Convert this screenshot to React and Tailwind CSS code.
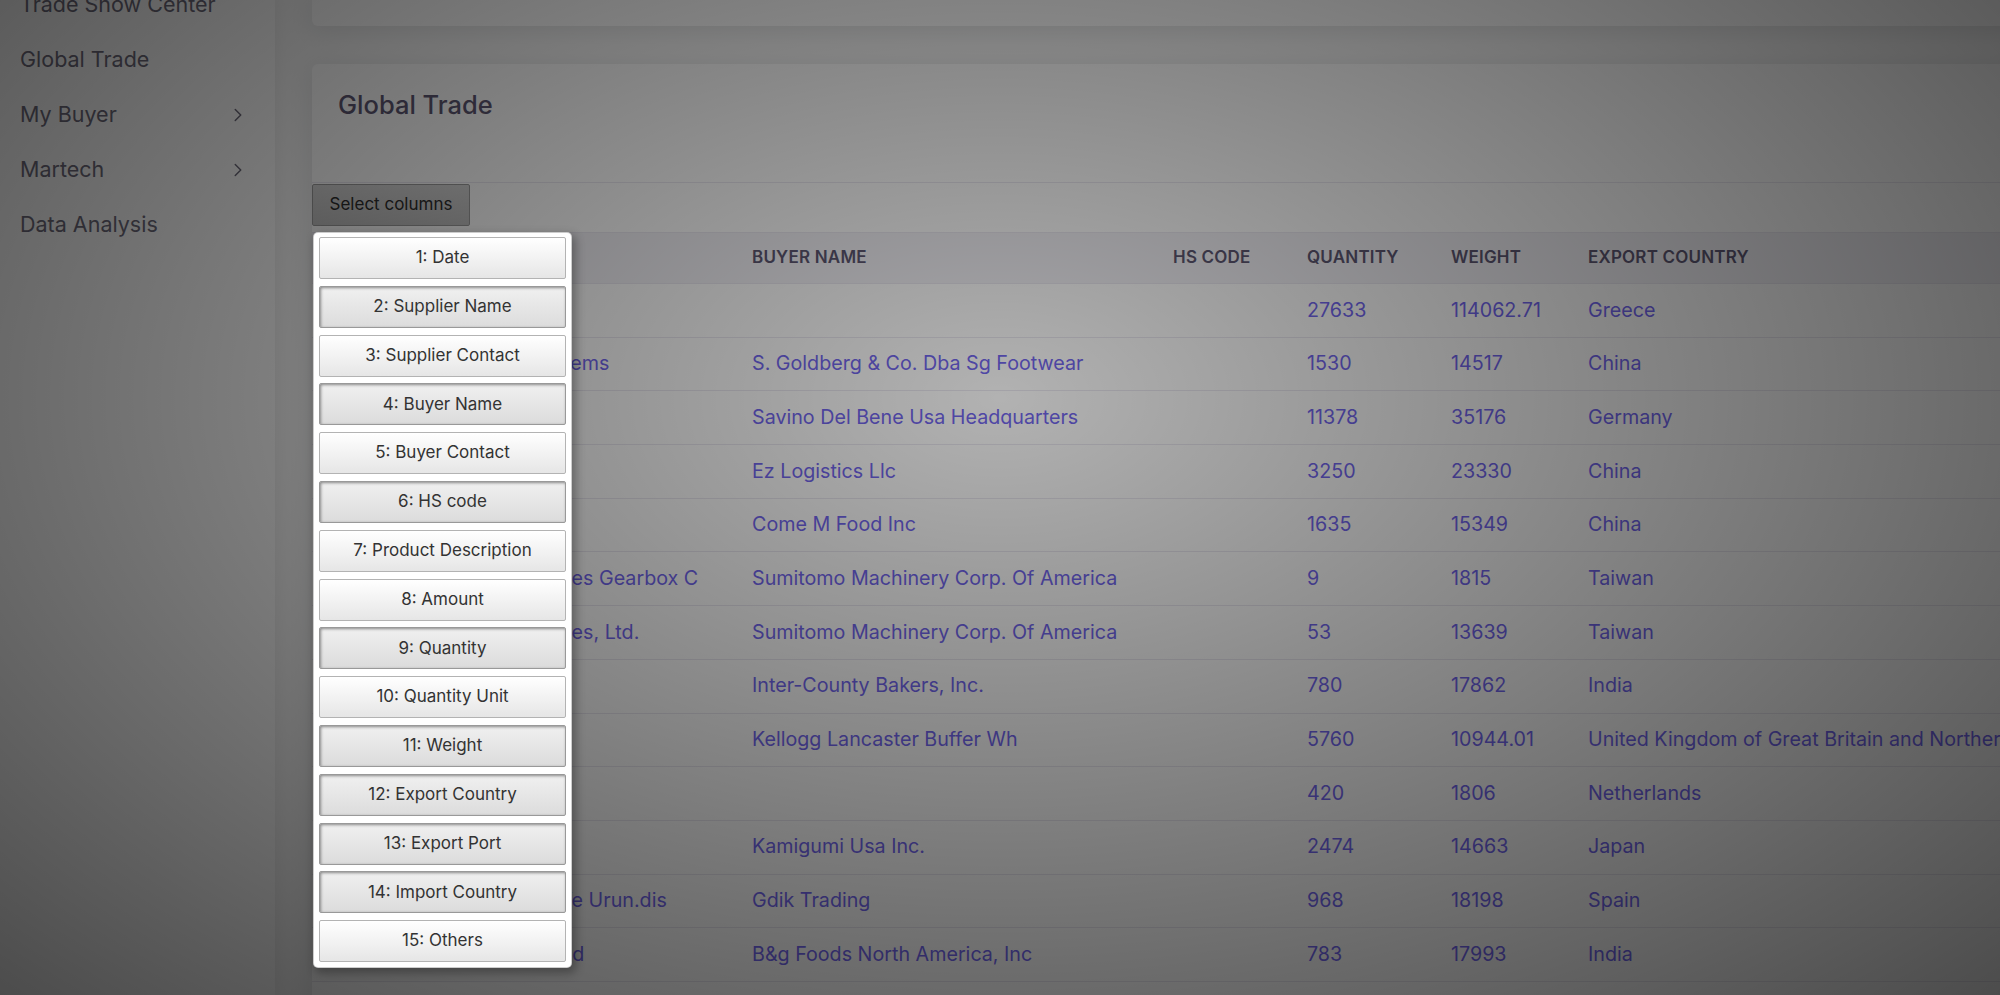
import { ChevronRight } from "lucide-react";

const menu = [
  { label: "Trade Show Center" },
  { label: "Global Trade" },
  { label: "My Buyer", sub: true },
  { label: "Martech", sub: true },
  { label: "Data Analysis" },
];

const columns = [
  { label: "1: Date", on: false },
  { label: "2: Supplier Name", on: true },
  { label: "3: Supplier Contact", on: false },
  { label: "4: Buyer Name", on: true },
  { label: "5: Buyer Contact", on: false },
  { label: "6: HS code", on: true },
  { label: "7: Product Description", on: false },
  { label: "8: Amount", on: false },
  { label: "9: Quantity", on: true },
  { label: "10: Quantity Unit", on: false },
  { label: "11: Weight", on: true },
  { label: "12: Export Country", on: true },
  { label: "13: Export Port", on: true },
  { label: "14: Import Country", on: true },
  { label: "15: Others", on: false },
];

const rows = [
  ["Olympia Trading S.A.", "", "27633", "114062.71", "Greece", "Piraeus", "United States"],
  ["Fujian Hengda Shoe Systems", "S. Goldberg & Co. Dba Sg Footwear", "1530", "14517", "China", "Yantian", "United States"],
  ["Schenker Deutschland", "Savino Del Bene Usa Headquarters", "11378", "35176", "Germany", "Hamburg", "United States"],
  ["Ningbo Logistics Co.", "Ez Logistics Llc", "3250", "23330", "China", "Ningbo", "United States"],
  ["Xiamen Foods Co.", "Come M Food Inc", "1635", "15349", "China", "Xiamen", "United States"],
  ["Sumitomo Heavy Industries Gearbox C", "Sumitomo Machinery Corp. Of America", "9", "1815", "Taiwan", "Kaohsiung", "United States"],
  ["Sumitomo Heavy Industries, Ltd.", "Sumitomo Machinery Corp. Of America", "53", "13639", "Taiwan", "Keelung", "United States"],
  ["Lal Qila Foods", "Inter-County Bakers, Inc.", "780", "17862", "India", "Nhava Sheva", "United States"],
  ["Kellogg Europe Limited", "Kellogg Lancaster Buffer Wh", "5760", "10944.01", "United Kingdom of Great Britain and Northern Ireland", "Felixstowe", "United States"],
  ["Hollandia Foods B.V.", "", "420", "1806", "Netherlands", "Rotterdam", "United States"],
  ["Nippon Express Co.", "Kamigumi Usa Inc.", "2474", "14663", "Japan", "Tokyo", "United States"],
  ["Gdik Gida Tarim Sanayi Ve Urun.dis", "Gdik Trading", "968", "18198", "Spain", "Valencia", "United States"],
  ["Ganesh Agro Food Limited", "B&g Foods North America, Inc", "783", "17993", "India", "Mundra", "United States"],
  ["Hellas Olive Co.", "Krinos Foods Llc", "1210", "20415", "Greece", "Piraeus", "United States"],
];

const heads = ["Supplier Name", "Buyer Name", "HS Code", "Quantity", "Weight", "Export Country", "Export Port", "Import Country"];
const widths = ["w-[414px]", "w-[421px]", "w-[134px]", "w-[144px]", "w-[137px]", "w-[620px]", "w-[260px]", "w-[260px]"];

function Sidebar() {
  return (
    <aside className="w-[275px] shrink-0 bg-white shadow-[0_0_15px_rgba(34,41,47,0.05)]">
      <nav className="-mt-[23px] flex flex-col">
        {menu.map((item) => (
          <div
            key={item.label}
            className="flex h-[55px] items-center justify-between pl-[20px] pr-[26px] text-[21.5px] text-[#6e6b7b]"
          >
            <span>{item.label}</span>
            {item.sub && <ChevronRight size={22} strokeWidth={1.6} />}
          </div>
        ))}
      </nav>
    </aside>
  );
}

function ColumnMenu() {
  return (
    <div className="absolute left-[313px] top-[232px] z-20 flex w-[259px] flex-col gap-[6.8px] rounded-[5px] border border-black/20 bg-white px-[5px] pb-[5px] pt-[4px] shadow-[3px_4px_10px_1px_rgba(0,0,0,0.3)]">
      {columns.map((c) => (
        <button
          key={c.label}
          className={
            c.on
              ? "h-[42px] w-full rounded-[2px] border border-[#999] bg-gradient-to-b from-[#f0f0f0] to-[#dcdcdc] text-[17px] text-[#333] shadow-[inset_1px_1px_3px_#888]"
              : "h-[42px] w-full rounded-[2px] border border-[#b3b3b3] bg-gradient-to-b from-white to-[#e6e6e6] text-[17px] text-[#333]"
          }
        >
          {c.label}
        </button>
      ))}
    </div>
  );
}

export default function App() {
  return (
    <div className="relative h-[995px] w-[2000px] overflow-hidden bg-[#f8f8f8] font-['Inter',sans-serif]">
      <div className="flex h-full">
        <Sidebar />
        <main className="flex min-w-0 flex-1 flex-col gap-[38px] overflow-hidden pl-[37px]">
          <div className="h-[26px] w-[2400px] shrink-0 rounded-b-[6px] bg-white shadow-[0_4px_24px_rgba(34,41,47,0.1)]" />

          <section className="w-[2400px] shrink-0 rounded-[6px] bg-white shadow-[0_4px_24px_rgba(34,41,47,0.1)]">
            <div className="h-[119px] border-b border-[#ebe9f1] px-[26px] pt-[22px]">
              <h2 className="text-[25.5px] font-medium text-[#5e5873]">Global Trade</h2>
            </div>

            <div className="pt-px">
              <button className="h-[42px] w-[158px] rounded-[2px] border border-[#9a9a9a] bg-gradient-to-b from-[#d2d2d2] to-[#bdbdbd] text-[17px] text-[#2d2d2d]">
                Select columns
              </button>
            </div>

            <table className="mt-[6px] w-[2390px] table-fixed border-collapse text-left">
              <colgroup>
                {widths.map((w, i) => (
                  <col key={i} className={w} />
                ))}
              </colgroup>
              <thead>
                <tr className="h-[51px] border-y border-[#ebe9f1] bg-[#f3f2f7]">
                  {heads.map((h) => (
                    <th
                      key={h}
                      className="overflow-hidden whitespace-nowrap px-[26px] text-[17px] font-semibold uppercase tracking-[0.2px] text-[#5e5873]"
                    >
                      {h}
                    </th>
                  ))}
                </tr>
              </thead>
              <tbody>
                {rows.map((r, i) => (
                  <tr key={i} className="h-[53.7px] border-b border-[#ebe9f1]">
                    {[r[0], r[1], "", r[2], r[3], r[4], r[5], r[6]].map((v, j) => (
                      <td
                        key={j}
                        className="overflow-hidden whitespace-nowrap px-[26px] text-[19.7px] text-[#7367f0]"
                      >
                        {v}
                      </td>
                    ))}
                  </tr>
                ))}
              </tbody>
            </table>
          </section>
        </main>
      </div>

      {/* backdrop behind the column picker */}
      <div className="absolute inset-0 z-10 bg-[radial-gradient(ellipse_farthest-corner_at_50%_40%,rgba(0,0,0,0.3)_0%,rgba(0,0,0,0.7)_100%)]" />
      <ColumnMenu />
    </div>
  );
}
